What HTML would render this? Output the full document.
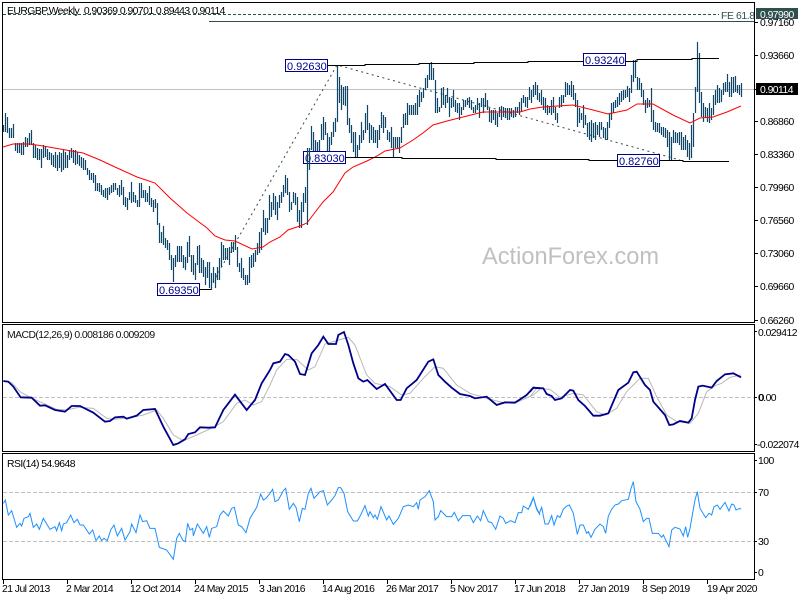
<!DOCTYPE html>
<html lang="en">
<head>
<meta charset="utf-8">
<title>EURGBP Weekly</title>
<style>
html,body{margin:0;padding:0;background:#fff;width:800px;height:600px;overflow:hidden}
svg{display:block}
text{font-family:"Liberation Sans",sans-serif;font-size:10.4px;letter-spacing:-.55px;fill:#000}
.lab{font-size:11px;letter-spacing:0;fill:#00008b}
</style>
</head>
<body>
<svg width="800" height="600" viewBox="0 0 800 600" xmlns="http://www.w3.org/2000/svg">
<rect width="800" height="600" fill="#fff"/>

<!-- levels -->
<path d="M3 89.5H754" stroke="#c0c0c0" fill="none" shape-rendering="crispEdges"/>
<path d="M3 14.5H719" stroke="#2f4f4f" stroke-dasharray="3 2" fill="none" shape-rendering="crispEdges"/>
<path d="M209 21.5H754" stroke="#2f4f4f" fill="none" shape-rendering="crispEdges"/>
<text x="721" y="19" style="fill:#2f4f4f;letter-spacing:-.4px">FE 61.8</text>

<!-- dotted trend lines -->
<path d="M213 282L337 65L680 160" stroke="#2f4f4f" stroke-dasharray="2 3.5" fill="none"/>

<!-- bars -->
<path stroke="#0f4566" stroke-width="1.2" fill="none" d="M3.5 125V132M5.5 113V132M7.5 117V133M9.5 128V138M11.5 128V138M13.5 124V138M15.5 143V151M17.5 143V153M19.5 143V153M21.5 143V155M23.5 142V155M25.5 137V147M27.5 138V147M29.5 133V145M31.5 130V145M33.5 143V158M35.5 145V158M37.5 148V160M39.5 149V160M41.5 149V168M43.5 145V158M45.5 147V157M47.5 149V160M49.5 152V160M51.5 153V165M53.5 155V167M55.5 152V168M57.5 155V171M59.5 152V168M61.5 153V172M63.5 150V170M65.5 152V168M67.5 155V168M69.5 150V160M71.5 148V158M73.5 150V163M75.5 150V165M77.5 152V164M79.5 155V166M81.5 157V168M83.5 158V170M85.5 160V170M87.5 168V175M89.5 170V180M91.5 173V180M93.5 173V183M95.5 175V191M97.5 183V191M99.5 183V192M101.5 185V195M103.5 190V197M105.5 188V198M107.5 188V200M109.5 187V195M111.5 185V193M113.5 183V192M115.5 183V190M117.5 188V195M119.5 185V197M121.5 180V195M123.5 187V205M125.5 197V207M127.5 198V210M129.5 192V200M131.5 182V203M133.5 192V202M135.5 195V203M137.5 200V207M139.5 183V207M141.5 183V198M143.5 190V198M145.5 190V202M147.5 193V202M149.5 186V205M151.5 198V207M153.5 200V212M155.5 199V208M157.5 203V225M159.5 223V243M161.5 232V243M163.5 226V245M165.5 238V248M167.5 240V250M169.5 243V260M171.5 255V270M173.5 258V282M175.5 255V267M177.5 246V262M179.5 246V262M181.5 246V262M183.5 255V268M185.5 257V270M187.5 242V263M189.5 236V257M191.5 255V272M193.5 255V275M195.5 263V280M197.5 246V265M199.5 245V273M201.5 258V273M203.5 260V277M205.5 267V285M207.5 262V278M209.5 262V288M211.5 273V290M213.5 267V283M215.5 273V288M217.5 267V280M219.5 258V280M221.5 242V267M223.5 245V260M225.5 248V260M227.5 248V260M229.5 247V265M231.5 242V253M233.5 242V252M235.5 235V250M237.5 247V267M239.5 263V272M241.5 258V278M243.5 268V280M245.5 275V285M247.5 275V285M249.5 257V283M251.5 255V268M253.5 253V267M255.5 250V262M257.5 243V255M259.5 232V253M261.5 228V250M263.5 210V232M265.5 218V235M267.5 218V233M269.5 195V220M271.5 202V217M273.5 193V210M275.5 196V215M277.5 202V220M279.5 195V208M281.5 192V203M283.5 185V197M285.5 175V193M287.5 178V195M289.5 192V212M291.5 202V210M293.5 192V203M295.5 193V205M297.5 197V222M299.5 210V228M301.5 202V228M303.5 193V212M305.5 187V203M311.5 126V150M313.5 132V157M315.5 140V157M317.5 142V157M319.5 140V157M321.5 124V140M323.5 117V140M325.5 122V135M327.5 133V157M329.5 137V157M331.5 132V145M333.5 122V137M335.5 118V132M337.5 65V122M339.5 77V103M341.5 85V110M343.5 87V105M345.5 86V106M347.5 86V125M349.5 118V133M351.5 125V143M353.5 132V152M355.5 132V157M357.5 145V157M359.5 135V150M361.5 122V143M363.5 130V140M365.5 113V133M367.5 105V130M369.5 123V143M371.5 125V140M373.5 127V143M375.5 130V143M377.5 130V148M379.5 125V140M381.5 112V128M383.5 115V133M385.5 117V128M387.5 130V140M389.5 132V142M391.5 127V148M393.5 137V157M395.5 137V148M397.5 137V148M399.5 137V153M401.5 127V143M403.5 114V128M405.5 113V125M407.5 103V125M409.5 105V115M411.5 105V115M413.5 105V115M415.5 103V115M417.5 95V115M419.5 90V107M421.5 92V102M423.5 88V98M425.5 78V90M427.5 75V88M429.5 63V80M431.5 62V80M433.5 68V80M435.5 80V113M437.5 98V113M439.5 107V112M441.5 88V108M443.5 87V105M445.5 95V108M447.5 88V103M449.5 97V117M451.5 98V108M453.5 90V107M455.5 100V112M457.5 103V113M459.5 103V120M461.5 107V115M463.5 100V110M465.5 100V107M467.5 98V105M469.5 97V108M471.5 100V110M473.5 107V113M475.5 105V113M477.5 98V110M479.5 103V118M481.5 98V107M483.5 98V113M485.5 93V107M487.5 100V110M489.5 108V122M491.5 110V123M493.5 110V120M495.5 110V125M497.5 113V127M499.5 107V117M501.5 106V120M503.5 107V117M505.5 108V118M507.5 108V120M509.5 108V120M511.5 108V117M513.5 110V118M515.5 107V117M517.5 107V113M519.5 102V115M521.5 98V112M523.5 95V103M525.5 97V107M527.5 97V108M529.5 87V100M531.5 90V103M533.5 85V97M535.5 82V95M537.5 85V100M539.5 93V102M541.5 90V105M543.5 97V110M545.5 98V113M547.5 105V115M549.5 107V113M551.5 100V115M553.5 97V113M555.5 107V120M557.5 113V123M559.5 97V108M561.5 95V107M563.5 95V103M565.5 82V97M567.5 83V95M569.5 85V95M571.5 81V97M573.5 85V100M575.5 93V107M577.5 100V127M579.5 108V123M581.5 113V120M583.5 105V128M585.5 115V125M587.5 123V137M589.5 122V140M591.5 120V142M593.5 123V138M595.5 122V140M597.5 125V135M599.5 122V137M601.5 122V130M603.5 127V138M605.5 128V140M607.5 122V140M609.5 113V128M611.5 103V120M613.5 102V113M615.5 100V108M617.5 97V107M619.5 93V105M621.5 91V102M623.5 90V100M625.5 90V98M627.5 86V97M629.5 88V102M631.5 75V93M633.5 60V82M635.5 60V78M637.5 77V90M639.5 78V90M641.5 83V97M643.5 90V105M645.5 100V113M647.5 98V108M649.5 100V107M651.5 88V122M653.5 110V130M655.5 122V132M657.5 123V132M659.5 123V133M661.5 127V135M663.5 127V137M665.5 128V138M667.5 130V147M669.5 132V160M671.5 137V160M673.5 130V143M675.5 132V143M677.5 133V143M679.5 132V145M681.5 132V150M683.5 137V150M685.5 135V150M687.5 140V157M689.5 143V160M691.5 125V158M693.5 113V147M695.5 87V113M697.5 42V92M699.5 53V103M701.5 92V117M703.5 103V122M705.5 107V118M707.5 108V122M709.5 103V123M711.5 108V120M713.5 95V115M715.5 90V105M717.5 85V103M719.5 88V103M721.5 90V102M723.5 83V95M725.5 82V92M727.5 74V92M729.5 82V97M731.5 77V97M733.5 77V93M735.5 76V92M737.5 85V93M739.5 85V95M741.5 83V97"/>

<!-- 50 MA -->
<polyline fill="none" stroke="#ff0000" stroke-width="1" points="3,147 13,144 30,144 43,146 60,149 83,153 100,160 115,167 137,177 155,183 170,198 187,213 207,228 215,236 225,240 235,241 252,249 263,247 270,242 280,237 288,230 300,226 307,223 313,215 323,202 333,192 345,173 353,167 367,161 377,156 385,151 400,148 413,140 423,133 433,125 447,121 463,117 483,112 520,112 530,109 543,107 573,105 593,110 608,114 627,110 637,104 653,104 673,115 690,123 700,118 713,117 727,112 741,106"/>

<!-- channel lines -->
<path fill="none" stroke="#000" shape-rendering="crispEdges" d="M327 65.5H365V64.5H419V63.5H474V62.5H528V61.5H637V59.5H692V58.5H719M345 157.5H402V158.5H496V159.5H589V160.5H683V161.5H729M199 289.5H211"/>

<!-- labels -->
<g fill="#fff" stroke="#00008b" stroke-width="1" shape-rendering="crispEdges">
<rect x="285.5" y="59.5" width="42" height="12"/>
<rect x="303.5" y="151.5" width="42" height="12"/>
<rect x="583.5" y="53.5" width="42" height="12"/>
<rect x="617.5" y="154.5" width="42" height="12"/>
<rect x="157.5" y="283.5" width="42" height="12"/>
</g>
<text class="lab" x="287" y="70">0.92630</text>
<text class="lab" x="305" y="162">0.83030</text>
<text class="lab" x="585" y="64">0.93240</text>
<text class="lab" x="619" y="165">0.82760</text>
<text class="lab" x="159" y="294">0.69350</text>
<path stroke="#0f4566" stroke-width="1.2" fill="none" d="M307.5 148V225M309.5 148V170"/>

<!-- watermark -->
<text x="482" y="264" style="font-size:23.6px;letter-spacing:0;fill:#c0c0c0">ActionForex.com</text>

<!-- MACD -->
<path d="M3 397.5H754" stroke="#c0c0c0" stroke-dasharray="4 2" fill="none" shape-rendering="crispEdges"/>
<g fill="none" transform="translate(0 320) scale(.33333)" stroke="#b8b8b8" stroke-width="3">
<polyline points="10,185 35,188 60,215 90,232 130,250 170,268 200,270 235,262 280,265 320,295 340,298 390,293 430,285 470,270 490,295 520,345 550,362 590,345 640,322 670,305 710,250 735,240 760,255 785,245 810,195"/>
</g>
<g fill="none" transform="translate(270 320) scale(.33333)" stroke="#b8b8b8" stroke-width="3">
<polyline points="0,195 20,150 50,118 80,118 115,150 135,140 165,72 200,62 235,52 255,75 290,165 315,190 360,200 395,225 420,220 460,175 495,140 520,145 560,195 600,220 650,235 700,248 745,245 790,225 810,208"/>
</g>
<g fill="none" transform="translate(530 320) scale(.33333)" stroke="#b8b8b8" stroke-width="3">
<polyline points="0,230 20,205 60,208 90,232 130,220 160,225 200,275 225,285 260,265 290,215 330,175 355,175 380,230 410,285 440,305 480,310 505,280 530,215 555,197 575,190 600,172 633,165"/>
</g>
<g fill="none" transform="translate(0 320) scale(.33333)" stroke="#00008b" stroke-width="5.4">
<polyline points="10,183 25,185 40,200 62,232 95,233 120,257 135,256 165,270 195,275 215,258 240,258 280,278 315,305 330,303 345,292 370,290 380,296 410,287 430,270 465,267 490,320 520,375 535,370 555,358 565,342 585,337 600,322 625,323 645,322 670,270 705,224 740,270 765,240 785,190 810,150"/>
</g>
<g fill="none" transform="translate(270 320) scale(.33333)" stroke="#00008b" stroke-width="5.4">
<polyline points="0,150 10,130 30,125 45,102 55,105 75,125 90,162 105,165 125,100 145,75 160,50 175,72 198,72 205,45 222,36 235,75 250,130 265,175 280,185 292,180 320,207 345,192 380,240 392,240 410,205 440,180 475,125 490,118 505,165 525,185 545,203 570,222 600,228 615,235 650,230 680,255 705,247 735,248 770,225 790,203 810,205"/>
</g>
<g fill="none" transform="translate(530 320) scale(.33333)" stroke="#00008b" stroke-width="5.4">
<polyline points="0,215 10,203 40,205 50,222 65,228 75,240 95,235 120,210 130,212 145,240 165,258 190,287 210,287 235,280 265,210 295,188 310,157 320,155 345,195 360,210 370,245 405,285 418,315 430,313 450,303 475,308 485,295 495,240 505,200 518,197 545,203 560,183 585,163 610,160 633,172"/>
</g>

<!-- RSI -->
<path d="M3 492.5H754M3 541.5H754" stroke="#c0c0c0" stroke-dasharray="4 2" fill="none" shape-rendering="crispEdges"/>
<g fill="none" transform="translate(0 450) scale(.33333)" stroke="#1e90ff" stroke-width="3">
<polyline points="10,160 16,150 25,195 35,182 50,232 60,220 65,228 72,205 85,200 90,190 100,232 110,222 118,238 130,205 150,238 165,230 170,242 178,218 185,242 190,222 200,218 212,195 222,218 232,208 240,225 250,225 268,252 278,240 288,272 298,258 305,272 312,265 322,272 332,240 342,225 352,258 365,235 375,270 390,245 395,222 408,248 420,195 428,215 440,212 450,235 465,235 478,292 500,300 520,328 530,265 538,250 548,270 556,275 563,220 570,240 578,235 580,258 592,222 610,250 620,230 628,262 635,235 650,230 660,195 670,183 685,198 695,175 703,172 715,225 725,230 738,248 750,205 770,172 782,132 790,150 798,145 810,130"/>
</g>
<g fill="none" transform="translate(270 450) scale(.33333)" stroke="#1e90ff" stroke-width="3">
<polyline points="0,130 8,118 15,155 25,150 40,122 47,115 58,178 70,160 78,172 88,215 97,175 105,178 115,130 123,115 132,145 150,125 160,122 172,165 185,150 195,137 205,113 212,113 222,130 233,185 250,213 262,213 272,195 285,167 295,198 300,185 310,203 315,195 322,208 333,170 350,210 357,198 370,223 385,205 400,170 415,165 430,170 440,158 445,178 450,150 465,140 478,122 490,155 495,210 505,200 512,182 530,200 545,200 553,187 565,213 578,197 600,197 610,218 622,198 632,212 640,182 655,215 665,218 677,238 690,198 700,205 707,220 722,212 735,218 745,188 755,188 760,168 775,178 790,143 800,178 810,195"/>
</g>
<g fill="none" transform="translate(530 450) scale(.33333)" stroke="#1e90ff" stroke-width="3">
<polyline points="0,170 10,143 20,175 28,190 35,172 45,222 55,222 65,197 72,225 82,197 90,202 100,178 110,168 118,165 130,190 142,253 150,225 160,225 170,250 175,245 183,262 195,238 210,222 220,230 227,250 235,198 245,178 255,165 265,162 275,152 295,148 303,115 310,95 318,155 330,178 340,215 350,205 357,205 367,250 385,250 395,262 400,255 417,290 425,240 435,232 450,237 460,258 467,230 473,262 480,235 487,195 495,150 502,125 510,175 527,203 537,190 545,195 552,170 562,165 570,178 585,157 597,183 605,162 612,165 618,180 630,175 633,178"/>
</g>

<!-- panel borders -->
<g fill="none" stroke="#000" shape-rendering="crispEdges">
<rect x="2.5" y="2.5" width="752" height="320"/>
<rect x="2.5" y="324.5" width="752" height="127"/>
<rect x="2.5" y="453.5" width="752" height="126"/>
<path d="M754 22.5H758M754 55.5H758M754 89.5H758M754 121.5H758M754 154.5H758M754 187.5H758M754 220.5H758M754 253.5H758M754 286.5H758M754 320.5H758M754 331.5H757M754 397.5H757M754 444.5H757M754 460.5H757M754 492.5H757M754 541.5H757M754 572.5H757"/>
<path d="M3.5 579V584M67.5 579V584M131.5 579V584M195.5 579V584M259.5 579V584M323.5 579V584M387.5 579V584M451.5 579V584M515.5 579V584M579.5 579V584M643.5 579V584M707.5 579V584"/>
</g>

<!-- titles -->
<text x="7" y="14">EURGBP,Weekly&#160;&#160;0.90369 0.90701 0.89443 0.90114</text>
<text x="7" y="338" style="fill:#111">MACD(12,26,9) 0.008186 0.009209</text>
<text x="7" y="467">RSI(14) 54.9648</text>

<!-- price axis -->
<text x="760" y="26">0.97160</text>
<rect x="756" y="8" width="42" height="11" fill="#2f4f4f"/>
<text x="760" y="18" style="fill:#fff">0.97990</text>
<text x="760" y="59">0.93660</text>
<rect x="756" y="83" width="42" height="12" fill="#000"/>
<text x="760" y="93" style="fill:#fff">0.90114</text>
<text x="760" y="125">0.86860</text>
<text x="760" y="158">0.83360</text>
<text x="760" y="191">0.79960</text>
<text x="760" y="224">0.76560</text>
<text x="760" y="257">0.73060</text>
<text x="760" y="290">0.69660</text>
<text x="760" y="324">0.66260</text>

<!-- MACD axis -->
<text x="758" y="336">0.029412</text>
<text x="758" y="401">0.00</text>
<text x="758.6" y="401">0</text>
<text x="757" y="448">-0.022074</text>

<!-- RSI axis -->
<text x="758" y="464">100</text>
<text x="758" y="496">70</text>
<text x="758" y="545">30</text>
<text x="758" y="576">0</text>

<!-- date axis -->
<g>
<text x="2" y="592">21 Jul 2013</text>
<text x="66" y="592">2 Mar 2014</text>
<text x="130" y="592">12 Oct 2014</text>
<text x="194" y="592">24 May 2015</text>
<text x="259" y="592">3 Jan 2016</text>
<text x="322" y="592">14 Aug 2016</text>
<text x="386" y="592">26 Mar 2017</text>
<text x="450" y="592">5 Nov 2017</text>
<text x="514" y="592">17 Jun 2018</text>
<text x="578" y="592">27 Jan 2019</text>
<text x="642" y="592">8 Sep 2019</text>
<text x="707" y="592">19 Apr 2020</text>
</g>
</svg>
</body>
</html>
